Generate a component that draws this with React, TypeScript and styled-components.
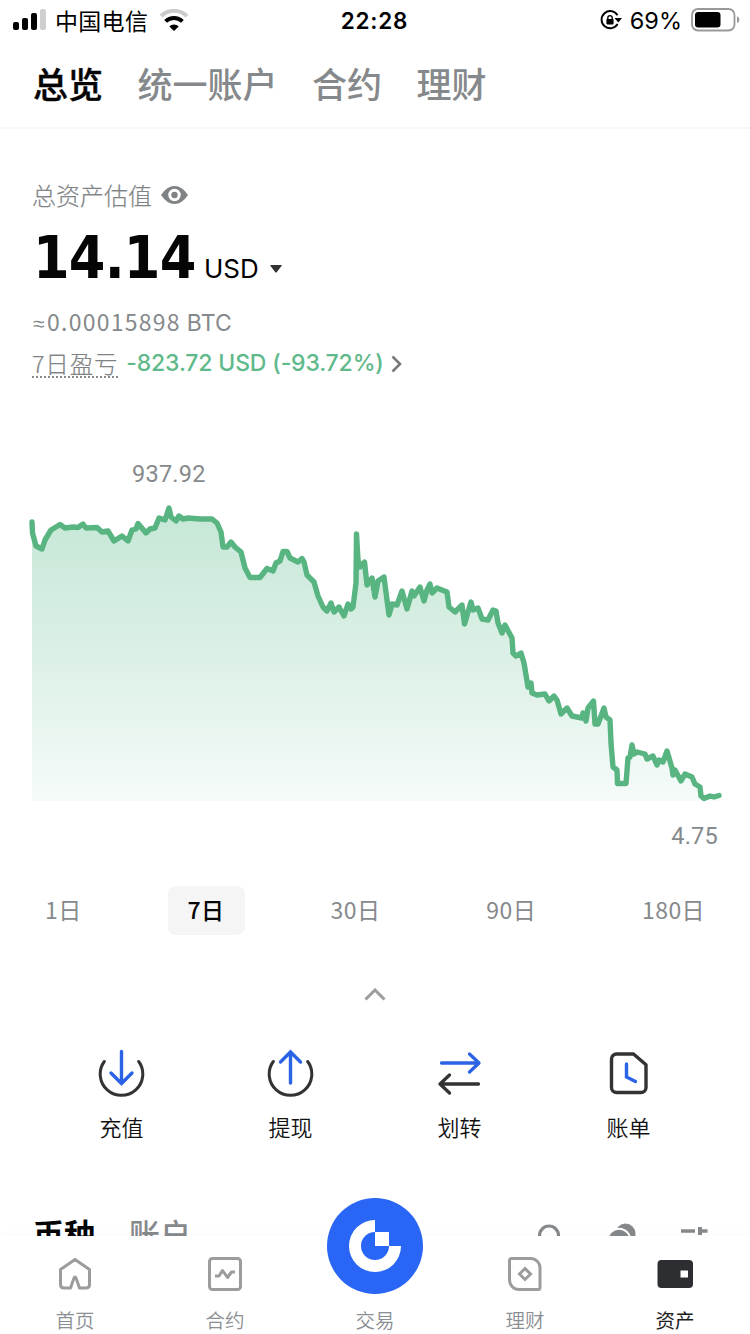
import React from "react";
import styled, { createGlobalStyle } from "styled-components";

const cjk = '"Noto Sans CJK SC"';

const GlobalStyle = createGlobalStyle`
  * { box-sizing: border-box; }
  body {
    margin: 0;
    background: #fff;
    color: #000;
    font-family: Inter, ${cjk}, sans-serif;
  }
  svg { display: block; flex: none; }
`;

const Screen = styled.div`
  width: 750px;
  height: 1334px;
  display: flex;
  flex-direction: column;
  background: #fff;
  overflow: hidden;
`;

const StatusBar = styled.header`
  height: 40px;
  flex: none;
  display: grid;
  grid-template-columns: 1fr auto 1fr;
  align-items: center;
  padding: 0 10px 0 13px;
`;

const StatusGroup = styled.div<{ $end?: boolean }>`
  display: flex;
  align-items: center;
  justify-content: ${(p) => (p.$end ? "flex-end" : "flex-start")};
`;

const Carrier = styled.span`
  font: 400 23px/30px ${cjk}, sans-serif;
  margin: -1px 11px 0 9px;
  letter-spacing: 0.3px;
`;

const Clock = styled.span`
  font: 600 22.5px/30px Inter, sans-serif;
  letter-spacing: 0.8px;
  margin: 1px 3px 0 -1px;
`;

const Percent = styled.span`
  font: 400 23.5px/30px Inter, sans-serif;
  margin: 2px 9px 0 8px;
`;

const TopTabs = styled.nav`
  height: 89px;
  flex: none;
  display: flex;
  align-items: flex-start;
  gap: 34.5px;
  padding: 18px 33px 0;
  border-bottom: 2px solid #f7f7f7;
`;

const TopTab = styled.a<{ $active?: boolean }>`
  font: 500 35px/50px ${cjk}, sans-serif;
  color: ${(p) => (p.$active ? "#050505" : "#86898b")};
  -webkit-text-stroke: ${(p) => (p.$active ? "0.4px #050505" : "0")};
`;

const Content = styled.main`
  flex: 1;
  min-height: 0;
  display: flex;
  flex-direction: column;
  overflow: hidden;
`;

const Summary = styled.section`
  height: 321px;
  flex: none;
  display: flex;
  flex-direction: column;
  padding: 49px 32px 0;
`;

const Row = styled.div<{ $h: number; $gap?: number; $top?: number }>`
  display: flex;
  align-items: center;
  height: ${(p) => p.$h}px;
  gap: ${(p) => p.$gap ?? 0}px;
  margin-top: ${(p) => p.$top ?? 0}px;
`;

const Label = styled.span`
  font: 300 24px/32px ${cjk}, sans-serif;
  color: #808385;
  -webkit-text-stroke: 0.2px #808385;
`;

const BalanceRow = styled.div`
  display: flex;
  align-items: baseline;
  height: 70px;
  margin-top: 11px;
`;

const Amount = styled.span`
  font: 700 58.5px/70px "DejaVu Sans Condensed", "DejaVu Sans", sans-serif;
  font-stretch: condensed;
  letter-spacing: -0.8px;
  padding-left: 1px;
  width: 162px;
  color: #050505;
`;

const Currency = styled.span`
  font: 400 26px/32px Inter, sans-serif;
  margin: 0 11px 0 10px;
`;

const Crypto = styled.span`
  display: flex;
  align-items: baseline;
  font: 400 23px/30px ${cjk}, sans-serif;
  letter-spacing: 1.25px;
  color: #86898b;
`;

const Approx = styled.span`
  width: 15px;
  font: 400 21px/30px "Liberation Sans", sans-serif;
  letter-spacing: 0;
  padding-left: 1px;
`;

const Unit = styled.span`
  font: 400 23px/30px Inter, sans-serif;
  letter-spacing: 0.2px;
  margin-left: 6px;
`;

const ProfitLabel = styled(Label)`
  font-size: 23.5px;
  line-height: 26px;
  letter-spacing: 0.8px;
  border-bottom: 2px dotted #85888a;
`;

const Profit = styled.span`
  font: 500 23px/30px Inter, sans-serif;
  letter-spacing: -0.15px;
  margin: -3px -2px 0 -1px;
  color: #60b98b;
`;

const ChartSection = styled.section`
  height: 402px;
  flex: none;
  display: flex;
  flex-direction: column;
`;

const ChartLabel = styled.div<{ $low?: boolean }>`
  font: 400 23.5px/30px Roboto, sans-serif;
  letter-spacing: 0.25px;
  color: #86898b;
  padding: ${(p) => (p.$low ? "0 32px 0 0" : "9px 0 0 132px")};
  text-align: ${(p) => (p.$low ? "right" : "left")};
`;

const Periods = styled.div`
  height: 49px;
  flex: none;
  display: flex;
  justify-content: space-between;
  margin-top: 34px;
  padding: 0 25px 0 25px;
`;

const Period = styled.button<{ $active?: boolean }>`
  border: 0;
  padding: 0 20px 4px;
  border-radius: 8px;
  background: ${(p) => (p.$active ? "#f5f5f5" : "transparent")};
  color: ${(p) => (p.$active ? "#050505" : "#86898b")};
  font: ${(p) => (p.$active ? 500 : 400)} 23px/44px ${cjk}, sans-serif;
  letter-spacing: 0.4px;
`;

const Collapse = styled.div`
  height: 60px;
  flex: none;
  display: flex;
  justify-content: center;
  padding-top: 53px;
`;

const Actions = styled.section`
  flex: none;
  display: grid;
  grid-template-columns: repeat(4, 169px);
  justify-content: center;
  margin-top: 54px;
`;

const Action = styled.button`
  border: 0;
  padding: 0;
  background: none;
  display: flex;
  flex-direction: column;
  align-items: center;
  gap: 13px;
  color: #111;
  font: 350 22px/32px ${cjk}, sans-serif;
`;

const AssetTabs = styled.section`
  flex: none;
  display: flex;
  align-items: flex-start;
  margin-top: 66px;
  padding: 0 40px 0 33px;
`;

const AssetTab = styled.a<{ $active?: boolean }>`
  font: ${(p) => (p.$active ? 700 : 500)} 31px/50px ${cjk}, sans-serif;
  color: ${(p) => (p.$active ? "#050505" : "#86898b")};
  margin-right: 34px;
`;

const Tools = styled.div`
  margin-left: auto;
  padding-top: 12px;
`;

const BottomNav = styled.nav`
  position: relative;
  height: 98px;
  flex: none;
  display: grid;
  grid-template-columns: repeat(5, 150px);
  background: #fff;
  box-shadow: 0 -2px 8px rgba(0, 0, 0, 0.025);
`;

const NavItem = styled.a<{ $active?: boolean }>`
  display: flex;
  flex-direction: column;
  align-items: center;
  padding-top: 18px;
  gap: 11px;
  color: ${(p) => (p.$active ? "#2d2e31" : "#9b9c9d")};
  font: ${(p) => (p.$active ? 400 : 350)} 19.5px/30px ${cjk}, sans-serif;
`;

const NavText = styled.span<{ $active?: boolean }>`
  color: ${(p) => (p.$active ? "#1c1d1f" : "#8b8e92")};
`;

const TradeButton = styled.div`
  position: absolute;
  left: 327px;
  top: -38px;
`;

const IconSlot = styled.div`
  height: 40px;
  display: flex;
  align-items: center;
`;

const series: [number, number][] = [
  [32, 522], [32.5, 533], [36, 546], [42, 549], [45, 540], [51, 530], [56, 527], [60, 524.5], [65, 528], [73, 527],
  [78, 527.5], [83, 524], [86, 528], [97, 527.5], [102, 532], [108, 531], [114, 541], [122, 536], [128, 541],
  [132, 530], [136, 529], [138, 523.5], [146, 533], [150, 529], [155, 528], [159, 518], [165, 520], [169, 508],
  [171, 517], [176, 521], [179, 516], [183, 519], [188, 518], [200, 519], [212, 519], [217, 523], [221, 532],
  [223, 547], [227, 547], [231, 542], [235, 547], [241, 552], [245, 568], [250, 577.5], [260, 577.5], [267, 568.5],
  [273, 571], [276, 563], [280, 561], [283, 551.5], [287, 551.5], [290, 558], [298, 562], [302, 558.5], [304, 562],
  [307, 575], [314, 582], [318, 596], [323, 607], [327, 611], [331, 603], [334, 612], [339, 607], [344, 616],
  [348, 604], [351, 609], [353, 607], [356, 583], [356.5, 534], [358, 560], [360, 567], [364.5, 562], [367, 585],
  [372, 578], [375, 597], [378, 581], [384, 577], [387, 600], [389, 615], [392, 604], [397, 605], [402, 591],
  [407, 609], [412, 591], [414, 596], [420, 587], [424, 601], [427, 590], [430, 584], [432, 593], [437, 588],
  [447, 592], [449, 607], [455, 612], [462, 605], [464.5, 624], [468, 612], [471, 602], [473, 610], [478, 608],
  [482, 619], [488, 620], [493, 610], [496, 611], [498, 623], [502, 633], [505, 625], [512, 638], [513, 653],
  [516, 656], [521, 653], [524, 663], [528, 687], [531, 683], [532, 693], [537, 695], [545, 694], [549, 701],
  [554, 696], [557, 700], [561, 714], [567, 708], [572, 716], [582, 718], [583, 713], [586, 721], [588, 708],
  [593.5, 701], [595, 724], [598, 724], [604, 708], [606, 717], [610, 720], [611, 743], [613, 767], [617, 770],
  [617.5, 783.5], [626, 783.5], [628, 758], [630, 757], [632, 745], [634, 754], [637, 752], [645, 754], [647, 759],
  [653, 756], [657, 765], [659, 760], [663, 762], [667, 751], [672, 768], [673, 775], [675, 770], [681, 781],
  [685, 774], [692, 777], [695, 784], [700, 787], [701, 796], [704, 798.5], [710, 796], [714, 797], [719, 795.5],
];

const toPoints = (pts: [number, number][]) => pts.map(([x, y]) => `${x},${y}`).join(" ");

const Chart = () => (
  <svg width="750" height="332" viewBox="0 489 750 332">
    <defs>
      <linearGradient id="area" x1="0" y1="508" x2="0" y2="801" gradientUnits="userSpaceOnUse">
        <stop offset="0" stopColor="#c5e7d6" />
        <stop offset="0.55" stopColor="#def1e8" />
        <stop offset="1" stopColor="#f5fbf9" />
      </linearGradient>
    </defs>
    <polygon points={`32,801 ${toPoints(series)} 719,801`} fill="url(#area)" />
    <polyline
      points={toPoints(series)}
      fill="none"
      stroke="#58b481"
      strokeWidth="5.4"
      strokeLinecap="round"
      strokeLinejoin="round"
    />
  </svg>
);

const SignalIcon = () => (
  <svg width="33" height="22" viewBox="0 0 33 22">
    <rect x="0" y="13" width="6" height="8" rx="2" />
    <rect x="9" y="9" width="6" height="12" rx="2" />
    <rect x="18" y="4" width="6" height="17" rx="2" />
    <rect x="27" y="0" width="6" height="21" rx="2" fill="#cfcfcf" />
  </svg>
);

const WifiIcon = () => (
  <svg width="30" height="22" viewBox="0 0 30 22">
    <path d="M2 7.2a18.5 18.5 0 0 1 26 0" fill="none" stroke="#cbcbcb" strokeWidth="4" />
    <path d="M6.6 12.4a12 12 0 0 1 16.8 0" fill="none" stroke="#000" strokeWidth="4" />
    <path d="M15 22l-4.7-4.6a6.8 6.8 0 0 1 9.4 0z" />
  </svg>
);

const RotationLockIcon = () => (
  <svg width="22" height="20" viewBox="0 0 22 20">
    <path d="M17.5 5.2A8.6 8.6 0 1 0 17.6 14" fill="none" stroke="#000" strokeWidth="1.9" />
    <path d="M14.5 8h7.5l-3.7 4.5z" />
    <rect x="6.4" y="9" width="7.2" height="5.4" rx="0.8" />
    <path d="M7.8 9.4V7.8a2.2 2.2 0 0 1 4.4 0v1.6" fill="none" stroke="#000" strokeWidth="1.4" />
  </svg>
);

const BatteryIcon = () => (
  <svg width="49" height="24" viewBox="0 0 49 24">
    <rect x="1" y="1" width="42.5" height="21.5" rx="6" fill="none" stroke="#999" strokeWidth="1.8" />
    <rect x="4" y="4" width="25.5" height="15.5" rx="3.2" />
    <path d="M46 8.3q2.4 1 2.4 3.4t-2.4 3.4z" fill="#999" />
  </svg>
);

const EyeIcon = () => (
  <svg width="27" height="18" viewBox="0 0 27 18">
    <path
      d="M0 9Q6 0 13.5 0T27 9Q21 18 13.5 18T0 9zM13.5 2.8a6.2 6.2 0 1 0 0 12.4a6.2 6.2 0 0 0 0-12.4z"
      fill="#808385"
      fillRule="evenodd"
    />
    <circle cx="13.5" cy="9" r="3.2" fill="#808385" />
  </svg>
);

const DepositIcon = ({ up }: { up?: boolean }) => (
  <svg width="48" height="48" viewBox="0.5 0 48 48" fill="none" strokeWidth="3" strokeLinecap="round">
    <path d="M6.8 12.5a21.3 21.3 0 1 0 34.4 0" stroke="#333" />
    <path
      d={up ? "M24 34V3.5M14 13l10-10 10 10" : "M24 2.5v32M13.5 24L24 34.5 34.5 24"}
      stroke="#2b63e6"
      strokeWidth="3.4"
    />
  </svg>
);

const TransferIcon = () => (
  <svg width="48" height="48" viewBox="0.5 0 48 48" fill="none" strokeWidth="3.3" strokeLinecap="round" strokeLinejoin="round">
    <path d="M6 14h37M34 5l9.5 9L34 23" stroke="#2b63e6" />
    <path d="M43 35H5M14 26L4.5 35l9.5 9" stroke="#333" />
  </svg>
);

const BillIcon = () => (
  <svg width="48" height="48" viewBox="0 0 48 48" fill="none" strokeWidth="3.4" strokeLinecap="round" strokeLinejoin="round">
    <path d="M11.5 5H28.5L41 15.8V38.5a5 5 0 0 1-5 5H11.5a5 5 0 0 1-5-5V10a5 5 0 0 1 5-5z" stroke="#333" />
    <path d="M21.5 15v13l9 4.5" stroke="#2b63e6" strokeLinejoin="miter" />
  </svg>
);

const ToolIcons = () => (
  <svg width="174" height="34" viewBox="0 0 174 34">
    <circle cx="13" cy="15.5" r="9.5" fill="none" stroke="#86898b" strokeWidth="3.2" />
    <path d="M20 22l6 7" stroke="#86898b" strokeWidth="3.2" />
    <circle cx="89.500" cy="13.500" r="10" fill="#86898b" />
    <circle cx="83" cy="20" r="11.300" fill="#86898b" stroke="#fff" strokeWidth="2" />
    <path d="M145 11h14M164 11h7.500" stroke="#86898b" strokeWidth="3.400" />
    <path d="M164 7v8" stroke="#86898b" strokeWidth="4" />
  </svg>
);

const HomeIcon = () => (
  <svg width="40" height="40" viewBox="0 0 40 40" fill="none" stroke="currentColor" strokeWidth="3" strokeLinejoin="round">
    <path d="M20 5.5L34.5 15.5V30.5q0 3.500-3.500 3.500H24.500L21.200 24.500q-1.200-3-2.400 0L15.500 34H9Q5.500 34 5.500 30.500V15.500z" />
  </svg>
);

const ContractIcon = () => (
  <svg width="40" height="40" viewBox="0 0 40 40" fill="none" stroke="currentColor" strokeWidth="3">
    <rect x="4.5" y="4.5" width="31" height="31" rx="3" />
    <path d="M10 22h4l3.500-5.500 5 7L26.500 18H30" strokeLinejoin="round" />
  </svg>
);

const EarnIcon = () => (
  <svg width="40" height="40" viewBox="0 0 40 40" fill="none" stroke="currentColor" strokeWidth="3">
    <path d="M6.500 4.500H25.500a9.500 9.500 0 0 1 9.500 9.500V33.500q0 2-2 2H14A9.500 9.500 0 0 1 4.500 26V6.500q0-2 2-2z" />
    <path d="M20 14.500l5.500 5.500-5.500 5.500-5.500-5.500z" />
  </svg>
);

const WalletIcon = () => (
  <svg width="40" height="40" viewBox="0 0 40 40">
    <rect x="2.500" y="6" width="35.500" height="28" rx="4" fill="currentColor" />
    <rect x="25.500" y="16.500" width="7.500" height="7" fill="#fff" />
  </svg>
);

const TradeIcon = () => (
  <svg width="96" height="96" viewBox="0 0 96 96">
    <circle cx="48" cy="48" r="48" fill="#2a66f6" />
    <path d="M48 22a26 26 0 1 0 26 26H62a14 14 0 1 1-14-14z" fill="#fff" />
    <rect x="48" y="34" width="14" height="14" fill="#fff" />
  </svg>
);

const periods = ["1日", "7日", "30日", "90日", "180日"];

const actions = [
  { label: "充值", icon: <DepositIcon /> },
  { label: "提现", icon: <DepositIcon up /> },
  { label: "划转", icon: <TransferIcon /> },
  { label: "账单", icon: <BillIcon /> },
];

const navItems = [
  { label: "首页", icon: <HomeIcon /> },
  { label: "合约", icon: <ContractIcon /> },
  { label: "交易", icon: null },
  { label: "理财", icon: <EarnIcon /> },
  { label: "资产", icon: <WalletIcon />, active: true },
];

export default function App() {
  return (
    <Screen>
      <GlobalStyle />
      <StatusBar>
        <StatusGroup>
          <SignalIcon />
          <Carrier>中国电信</Carrier>
          <WifiIcon />
        </StatusGroup>
        <Clock>22:28</Clock>
        <StatusGroup $end>
          <RotationLockIcon />
          <Percent>69%</Percent>
          <BatteryIcon />
        </StatusGroup>
      </StatusBar>
      <TopTabs>
        <TopTab $active>总览</TopTab>
        <TopTab>统一账户</TopTab>
        <TopTab>合约</TopTab>
        <TopTab>理财</TopTab>
      </TopTabs>
      <Content>
        <Summary>
          <Row $h={34} $gap={9}>
            <Label>总资产估值</Label>
            <EyeIcon />
          </Row>
          <BalanceRow>
            <Amount>14.14</Amount>
            <Currency>USD</Currency>
            <svg width="12" height="13" viewBox="0 0 12 13">
              <path d="M0.5 0h11q.5.5 0 1L6.5 7.5h-1L.5 1z" fill="#333" />
            </svg>
          </BalanceRow>
          <Row $h={32} $top={13}>
            <Crypto>
              <Approx>≈</Approx>0.00015898<Unit>BTC</Unit>
            </Crypto>
          </Row>
          <Row $h={34} $gap={9} $top={9}>
            <ProfitLabel>7日盈亏</ProfitLabel>
            <Profit>-823.72 USD (-93.72%)</Profit>
            <svg width="12" height="18" viewBox="0 0 12 18">
              <path d="M1.5 1.5L9 9l-7.5 7.5" fill="none" stroke="#77797b" strokeWidth="2.6" />
            </svg>
          </Row>
        </Summary>
        <ChartSection>
          <ChartLabel>937.92</ChartLabel>
          <Chart />
          <ChartLabel $low>4.75</ChartLabel>
        </ChartSection>
        <Periods>
          {periods.map((p) => (
            <Period key={p} $active={p === "7日"}>
              {p}
            </Period>
          ))}
        </Periods>
        <Collapse>
          <svg width="22" height="13" viewBox="0 0 22 13">
            <path d="M1.5 11.5L11 2l9.5 9.5" fill="none" stroke="#9a9c9d" strokeWidth="3" />
          </svg>
        </Collapse>
        <Actions>
          {actions.map((a) => (
            <Action key={a.label}>
              {a.icon}
              {a.label}
            </Action>
          ))}
        </Actions>
        <AssetTabs>
          <AssetTab $active>币种</AssetTab>
          <AssetTab>账户</AssetTab>
          <Tools>
            <ToolIcons />
          </Tools>
        </AssetTabs>
      </Content>
      <BottomNav>
        {navItems.map((n) => (
          <NavItem key={n.label} $active={n.active}>
            <IconSlot>{n.icon}</IconSlot>
            <NavText $active={n.active}>{n.label}</NavText>
          </NavItem>
        ))}
        <TradeButton>
          <TradeIcon />
        </TradeButton>
      </BottomNav>
    </Screen>
  );
}
